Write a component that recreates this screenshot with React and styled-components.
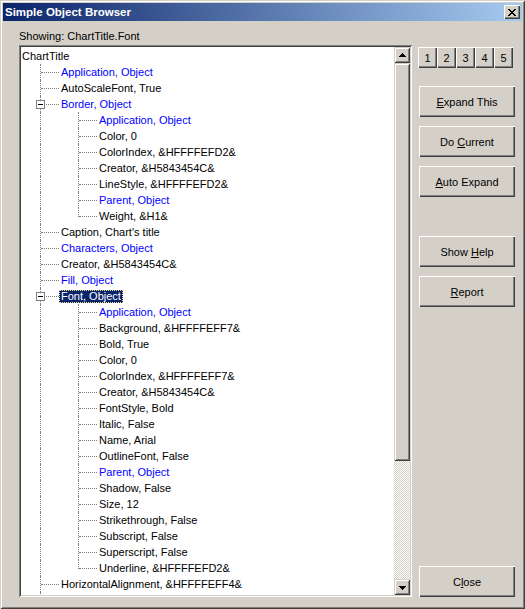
import React from 'react'
import styled, { createGlobalStyle } from 'styled-components'

const GlobalStyle = createGlobalStyle`
  html, body {
    margin: 0;
    padding: 0;
    background: #d4d0c8;
  }
  body {
    font-family: "Liberation Sans", Arial, sans-serif;
    font-size: 11px;
    color: #000;
  }
`

const BLUE = '#0000ff'

const treeData = [
  { label: 'Application, Object', blue: true },
  { label: 'AutoScaleFont, True' },
  {
    label: 'Border, Object', blue: true, children: [
      { label: 'Application, Object', blue: true },
      { label: 'Color, 0' },
      { label: 'ColorIndex, &HFFFFEFD2&' },
      { label: 'Creator, &H5843454C&' },
      { label: 'LineStyle, &HFFFFEFD2&' },
      { label: 'Parent, Object', blue: true },
      { label: 'Weight, &H1&' },
    ],
  },
  { label: "Caption, Chart's title" },
  { label: 'Characters, Object', blue: true },
  { label: 'Creator, &H5843454C&' },
  { label: 'Fill, Object', blue: true },
  {
    label: 'Font, Object', blue: true, selected: true, children: [
      { label: 'Application, Object', blue: true },
      { label: 'Background, &HFFFFEFF7&' },
      { label: 'Bold, True' },
      { label: 'Color, 0' },
      { label: 'ColorIndex, &HFFFFEFF7&' },
      { label: 'Creator, &H5843454C&' },
      { label: 'FontStyle, Bold' },
      { label: 'Italic, False' },
      { label: 'Name, Arial' },
      { label: 'OutlineFont, False' },
      { label: 'Parent, Object', blue: true },
      { label: 'Shadow, False' },
      { label: 'Size, 12' },
      { label: 'Strikethrough, False' },
      { label: 'Subscript, False' },
      { label: 'Superscript, False' },
      { label: 'Underline, &HFFFFEFD2&' },
    ],
  },
  { label: 'HorizontalAlignment, &HFFFFEFF4&' },
  { label: 'Interior, Object', blue: true },
  { label: 'Left, 132' },
  { label: 'Name, Chart Title' },
]

// flatten the tree into rows, keeping which ancestor lines continue
const flatten = (nodes, depth, lines, out) => {
  nodes.forEach((node, i) => {
    const isLast = i === nodes.length - 1
    out.push({ ...node, depth, lines, isLast })
    if (node.children) flatten(node.children, depth + 1, [...lines, !isLast], out)
  })
  return out
}

const rows = [{ label: 'ChartTitle', depth: 0, lines: [] }, ...flatten(treeData, 1, [], [])]

const Window = styled.div`
  width: 525px;
  height: 609px;
  box-sizing: border-box;
  padding: 3px;
  background: #d4d0c8;
  box-shadow: inset 1px 1px #d4d0c8, inset -1px -1px #404040, inset 2px 2px #fff, inset -2px -2px #808080;
  display: flex;
  flex-direction: column;
  overflow: hidden;
`

const TitleBar = styled.div`
  height: 18px;
  flex-shrink: 0;
  display: flex;
  align-items: center;
  justify-content: space-between;
  padding: 0 2px;
  background: linear-gradient(to right, #0a246a, #a6caf0);
  color: #fff;
  font-weight: bold;
  font-size: 11.5px;
`

const TitleText = styled.span`
  line-height: 18px;
`

const CloseBox = styled.div`
  width: 16px;
  height: 14px;
  box-sizing: border-box;
  background: #d4d0c8;
  box-shadow: inset 1px 1px #fff, inset -1px -1px #404040, inset -2px -2px #808080;
  display: flex;
  align-items: center;
  justify-content: center;
  padding-right: 1px;
`

const Body = styled.div`
  flex: 1;
  min-height: 0;
  display: flex;
  padding: 8px 7px 9px 16px;
`

const LeftCol = styled.div`
  width: 393px;
  display: flex;
  flex-direction: column;
`

const Showing = styled.div`
  height: 13px;
  line-height: 13px;
  padding-top: 1px;
  margin-bottom: 2px;
`

const ListBox = styled.div`
  flex: 1;
  min-height: 0;
  display: flex;
  background: #fff;
  padding: 2px;
  box-shadow: inset 1px 1px #808080, inset -1px -1px #fff, inset 2px 2px #404040, inset -2px -2px #d4d0c8;
  overflow: hidden;
`

const TreeArea = styled.div`
  flex: 1;
  overflow: hidden;
  padding-top: 1px;
`

const Row = styled.div`
  display: flex;
  align-items: center;
  height: 16px;
  white-space: nowrap;
`

const Guide = styled.span`
  position: relative;
  flex-shrink: 0;
  width: 38px;
  height: 16px;

  &::before {
    content: '';
    position: absolute;
    left: 19px;
    top: 0;
    height: ${p => (p.$line === 'full' ? '16px' : p.$line === 'top' ? '9px' : '0')};
    border-left: ${p => (p.$line === 'none' ? '0' : '1px dotted #808080')};
  }

  &::after {
    content: '';
    display: ${p => (p.$branch ? 'block' : 'none')};
    position: absolute;
    left: 20px;
    top: 8px;
    width: 18px;
    border-top: 1px dotted #808080;
  }
`

const Expander = styled.span`
  position: absolute;
  z-index: 1;
  left: 15px;
  top: 4px;
  width: 9px;
  height: 9px;
  box-sizing: border-box;
  border: 1px solid #808080;
  background: #fff;

  &::before {
    content: '';
    position: absolute;
    left: 1px;
    top: 3px;
    width: 5px;
    height: 1px;
    background: #000;
  }
`

const Label = styled.span`
  height: 13px;
  line-height: 13px;
  padding: 0 2px;
  margin-left: ${p => (p.$root ? '-1px' : '0')};
  color: ${p => (p.$selected ? '#fff' : p.$blue ? BLUE : '#000')};
  background: ${p => (p.$selected ? '#0a246a' : 'transparent')};
  outline: ${p => (p.$selected ? '1px dotted #f2d98c' : 'none')};
  outline-offset: -1px;
`

const ScrollBar = styled.div`
  width: 16px;
  display: flex;
  flex-direction: column;
`

const raisedSmall = `
  background: #d4d0c8;
  box-sizing: border-box;
  box-shadow: inset 1px 1px #d4d0c8, inset -1px -1px #404040, inset 2px 2px #fff, inset -2px -2px #808080;
`

const ScrollBtn = styled.div`
  ${raisedSmall}
  height: 16px;
  flex-shrink: 0;
  display: flex;
  align-items: center;
  justify-content: center;
  padding-bottom: ${p => (p.$down ? '0' : '1px')};
  padding-top: ${p => (p.$down ? '1px' : '0')};
`

const Thumb = styled.div`
  ${raisedSmall}
  height: 398px;
  flex-shrink: 0;
`

const Track = styled.div`
  flex: 1;
  background: repeating-conic-gradient(#d4d0c8 0 25%, #fff 0 50%) 0 0 / 2px 2px;
`

const RightCol = styled.div`
  width: 97px;
  margin-left: 6px;
  padding-top: 18px;
  display: flex;
  flex-direction: column;
`

const NumRow = styled.div`
  display: flex;
`

const buttonFace = `
  background: #d4d0c8;
  box-sizing: border-box;
  box-shadow: inset 1px 1px #fff, inset -1px -1px #404040, inset -2px -2px #808080;
  display: flex;
  align-items: center;
  justify-content: center;
  color: #000;
  font-size: 11px;
`

const NumBtn = styled.div`
  ${buttonFace}
  width: 19px;
  height: 21px;
`

const Button = styled.div`
  ${buttonFace}
  width: 96px;
  height: 31px;
  margin-left: 1px;
  margin-top: ${p => (p.$auto ? 'auto' : `${p.$gap}px`)};
`

const Arrow = ({ down }) => (
  <svg width="7" height="4" viewBox="0 0 7 4" shapeRendering="crispEdges">
    <path
      fill="#000"
      d={down
        ? 'M0 0h7v1h-7z M1 1h5v1h-5z M2 2h3v1h-3z M3 3h1v1h-1z'
        : 'M3 0h1v1h-1z M2 1h3v1h-3z M1 2h5v1h-5z M0 3h7v1h-7z'}
    />
  </svg>
)

const CloseGlyph = () => (
  <svg width="8" height="7" viewBox="0 0 8 7" shapeRendering="crispEdges">
    <path
      fill="#000"
      d="M0 0h2v1h-2z M6 0h2v1h-2z M1 1h2v1h-2z M5 1h2v1h-2z M2 2h4v1h-4z M3 3h2v1h-2z M2 4h4v1h-4z M1 5h2v1h-2z M5 5h2v1h-2z M0 6h2v1h-2z M6 6h2v1h-2z"
    />
  </svg>
)

const TreeRow = ({ row }) => (
  <Row>
    {row.lines.map((cont, i) => (
      <Guide key={i} $line={cont ? 'full' : 'none'} />
    ))}
    {row.depth > 0 && (
      <Guide $line={row.isLast ? 'top' : 'full'} $branch>
        {row.children && <Expander />}
      </Guide>
    )}
    <Label $root={row.depth === 0} $blue={row.blue} $selected={row.selected}>
      {row.label}
    </Label>
  </Row>
)

const App = () => {
  return (
    <Window>
      <GlobalStyle />
      <TitleBar>
        <TitleText>Simple Object Browser</TitleText>
        <CloseBox>
          <CloseGlyph />
        </CloseBox>
      </TitleBar>

      <Body>
        <LeftCol>
          <Showing>Showing: ChartTitle.Font</Showing>
          <ListBox>
            <TreeArea>
              {rows.map((row, i) => (
                <TreeRow key={i} row={row} />
              ))}
            </TreeArea>
            <ScrollBar>
              <ScrollBtn><Arrow /></ScrollBtn>
              <Thumb />
              <Track />
              <ScrollBtn $down><Arrow down /></ScrollBtn>
            </ScrollBar>
          </ListBox>
        </LeftCol>

        <RightCol>
          <NumRow>
            {[1, 2, 3, 4, 5].map(n => (
              <NumBtn key={n}>{n}</NumBtn>
            ))}
          </NumRow>
          <Button $gap={18}><span><u>E</u>xpand This</span></Button>
          <Button $gap={9}><span>Do <u>C</u>urrent</span></Button>
          <Button $gap={9}><span><u>A</u>uto Expand</span></Button>
          <Button $gap={39}><span>Show <u>H</u>elp</span></Button>
          <Button $gap={9}><span><u>R</u>eport</span></Button>
          <Button $auto><span>C<u>l</u>ose</span></Button>
        </RightCol>
      </Body>
    </Window>
  )
}

export default App
